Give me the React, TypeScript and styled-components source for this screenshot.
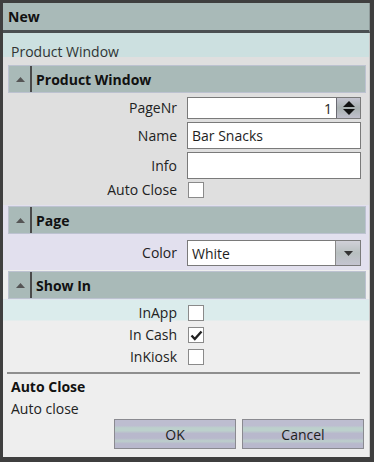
import React from 'react';
import styled, { createGlobalStyle } from 'styled-components';

const GlobalStyle = createGlobalStyle`
  html, body {
    margin: 0;
    padding: 0;
    background: #3f3f3f;
  }
  * {
    box-sizing: border-box;
  }
`;

interface FieldRow {
  label: string;
  kind: 'spin' | 'text' | 'check' | 'combo';
  value?: string;
  checked?: boolean;
}

interface Section {
  title: string;
  tone: 'gray' | 'lavender' | 'light';
  rows: FieldRow[];
}

const sections: Section[] = [
  {
    title: 'Product Window',
    tone: 'gray',
    rows: [
      { label: 'PageNr', kind: 'spin', value: '1' },
      { label: 'Name', kind: 'text', value: 'Bar Snacks' },
      { label: 'Info', kind: 'text', value: '' },
      { label: 'Auto Close', kind: 'check', checked: false },
    ],
  },
  {
    title: 'Page',
    tone: 'lavender',
    rows: [{ label: 'Color', kind: 'combo', value: 'White' }],
  },
  {
    title: 'Show In',
    tone: 'light',
    rows: [
      { label: 'InApp', kind: 'check', checked: false },
      { label: 'In Cash', kind: 'check', checked: true },
      { label: 'InKiosk', kind: 'check', checked: false },
    ],
  },
];

const Check = ({ checked }: { checked?: boolean }) => (
  <CheckBox>
    {checked && (
      <svg width="13" height="11" viewBox="0 0 13 11">
        <path d="M1.5 5.5 L4.8 9 L11.5 1.5" fill="none" stroke="#222" strokeWidth="2.4" />
      </svg>
    )}
  </CheckBox>
);

const Field = ({ row }: { row: FieldRow }) => {
  if (row.kind === 'check') return <Check checked={row.checked} />;
  if (row.kind === 'spin') {
    return (
      <Input $h={22}>
        <InputText $right>{row.value}</InputText>
        <SpinButton>
          <svg width="12" height="6" viewBox="0 0 12 6"><path d="M0 6 L6 0 L12 6 Z" fill="#111" /></svg>
          <svg width="12" height="6" viewBox="0 0 12 6"><path d="M0 0 L12 0 L6 6 Z" fill="#111" /></svg>
        </SpinButton>
      </Input>
    );
  }
  if (row.kind === 'combo') {
    return (
      <Input $h={26}>
        <InputText>{row.value}</InputText>
        <DropButton>
          <svg width="9" height="5" viewBox="0 0 9 5"><path d="M0 0 L9 0 L4.5 5 Z" fill="#333" /></svg>
        </DropButton>
      </Input>
    );
  }
  return (
    <Input $h={27}>
      <InputText>{row.value}</InputText>
    </Input>
  );
};

const App = () => {
  return (
    <>
      <GlobalStyle />
      <Window>
        <TitleBar>New</TitleBar>
        <Body>
          <Caption>Product Window</Caption>
          {sections.map((section) => (
            <SectionBlock key={section.title} $tone={section.tone}>
              <SectionHeader>
                <Collapse>
                  <svg width="9" height="5" viewBox="0 0 9 5"><path d="M0 5 L4.5 0 L9 5 Z" fill="#555" /></svg>
                </Collapse>
                <SectionTitle>{section.title}</SectionTitle>
              </SectionHeader>
              <Rows $tone={section.tone}>
                {section.rows.map((row) => (
                  <Row key={row.label} $kind={row.kind}>
                    <Label>{row.label}</Label>
                    <Field row={row} />
                  </Row>
                ))}
              </Rows>
            </SectionBlock>
          ))}
          <Separator />
          <Description>
            <DescTitle>Auto Close</DescTitle>
            <DescText>Auto close</DescText>
          </Description>
          <Buttons>
            <Button>OK</Button>
            <Button>Cancel</Button>
          </Buttons>
        </Body>
      </Window>
    </>
  );
};

export default App;

const Window = styled.div`
  width: 374px;
  height: 462px;
  border-style: solid;
  border-color: #3f3f3f;
  border-width: 3px 4px 5px 3px;
  font-family: "Open Sans", "Noto Sans", sans-serif;
  font-size: 14px;
  color: #1e1e1e;
  display: flex;
  flex-direction: column;
  background: #eeeeee;
  overflow: hidden;
`;

const TitleBar = styled.div`
  height: 30px;
  flex: none;
  background: #a9bab8;
  border-right: 1px solid #8e9a99;
  border-bottom: 3px solid #4a4f52;
  font-weight: 700;
  line-height: 27px;
  padding-left: 5px;
  color: #111;
`;

const Body = styled.div`
  flex: 1;
  display: flex;
  flex-direction: column;
  background: #eeeeee;
  border-right: 1px solid #c8c8c8;
`;

const Caption = styled.div`
  height: 32px;
  padding: 9px 0 0 8px;
  background: linear-gradient(#cce0e0 0, #cce0e0 24px, #dfdfdf 24px);
  color: #333;
  line-height: 20px;
`;

const toneBg = {
  gray: '#dfdfdf',
  lavender: '#e2e0ee',
  light: 'linear-gradient(#e2e0ee 0, #dbecec 1px, #dbecec 21px, #eeeeee 22px)',
};

const SectionBlock = styled.div<{ $tone: Section['tone'] }>`
  background: ${(p) => (p.$tone === 'gray' ? '#dfdfdf' : p.$tone === 'lavender' ? '#e2e0ee' : 'transparent')};
  padding-top: ${(p) => (p.$tone === 'gray' ? '0' : '1px')};
`;

const SectionHeader = styled.div`
  height: 28px;
  margin: 0 3px 0 5px;
  background: #a9bab8;
  border: 1px solid #bcc2d0;
  display: flex;
  align-items: center;
`;

const Collapse = styled.div`
  width: 23px;
  height: 26px;
  display: flex;
  align-items: center;
  justify-content: center;
  border-right: 2px solid #4a4a4a;
  padding-left: 2px;
`;

const SectionTitle = styled.div`
  font-weight: 700;
  padding-left: 4px;
  color: #111;
`;

const Rows = styled.div<{ $tone: Section['tone'] }>`
  background: ${(p) => toneBg[p.$tone]};
  padding: ${(p) => (p.$tone === 'light' ? '6px 0 7px' : p.$tone === 'lavender' ? '6px 0 4px' : '4px 0 7px')};
  display: flex;
  flex-direction: column;
  gap: ${(p) => (p.$tone === 'light' ? '6px' : '3px')};
`;

const Row = styled.div<{ $kind: FieldRow['kind'] }>`
  display: grid;
  grid-template-columns: 174px 174px;
  column-gap: 10px;
  align-items: center;
  min-height: ${(p) => (p.$kind === 'check' ? '16px' : 'auto')};
`;

const Label = styled.div`
  text-align: right;
  color: #222;
  line-height: 16px;
`;

const Input = styled.div<{ $h: number }>`
  height: ${(p) => p.$h}px;
  background: #fff;
  border: 1.5px solid #7a7a7a;
  display: flex;
  align-items: stretch;
`;

const InputText = styled.div<{ $right?: boolean }>`
  flex: 1;
  display: flex;
  align-items: center;
  justify-content: ${(p) => (p.$right ? 'flex-end' : 'flex-start')};
  padding: 0 4px;
  color: #1e1e1e;
`;

const SpinButton = styled.div`
  width: 24px;
  border-left: 1.5px solid #6a6a72;
  background: linear-gradient(#c4c4d0, #a8b0b0 50%, #c0c0cc);
  display: flex;
  flex-direction: column;
  align-items: center;
  justify-content: space-evenly;
`;

const DropButton = styled.div`
  width: 25px;
  border-left: 1.5px solid #8a8a8a;
  background: linear-gradient(#d0d0d8, #b8c0c0 50%, #c4c4d0);
  display: flex;
  align-items: center;
  justify-content: center;
`;

const CheckBox = styled.div`
  width: 16px;
  height: 16px;
  margin-left: 1px;
  background: #fff;
  border: 1.5px solid #8a8a8a;
  display: flex;
  align-items: center;
  justify-content: center;
`;

const Separator = styled.div`
  height: 2px;
  margin: 0 9px 0 4px;
  background: #8e8e8e;
`;

const Description = styled.div`
  padding: 3px 0 0 8px;
  display: flex;
  flex-direction: column;
  gap: 2px;
  line-height: 20px;
`;

const DescTitle = styled.div`
  font-weight: 700;
  color: #111;
`;

const DescText = styled.div`
  color: #222;
`;

const Buttons = styled.div`
  display: flex;
  justify-content: flex-end;
  gap: 6px;
  padding: 0 5px 0 0;
`;

const Button = styled.div`
  width: 122px;
  height: 30px;
  border: 1.5px solid #8a8a90;
  background: linear-gradient(#bdbdd0 0, #bdbdd0 20%, #bcd0cc 28%, #bcd0cc 38%, #b8b8cc 48%, #b8b8cc 65%, #bccfcb 75%, #b8b8cc 85%);
  display: flex;
  align-items: center;
  justify-content: center;
  color: #1e1e1e;
`;
